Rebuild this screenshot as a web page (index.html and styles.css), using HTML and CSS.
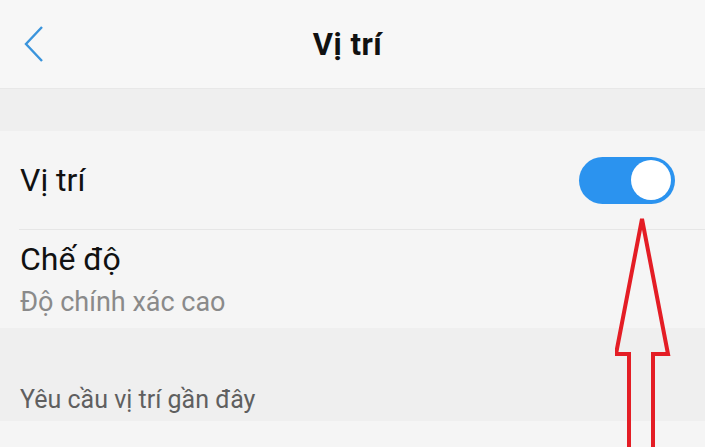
FILE: index.html
```html
<!DOCTYPE html>
<html lang="vi">
<head>
    <meta charset="UTF-8">
    <meta name="viewport" content="width=device-width, initial-scale=1.0">
    <title>Vị trí</title>
    <link rel="stylesheet" href="styles.css">
</head>
<body>
    <div class="screen">
        <header class="topbar">
            <button class="back">
                <svg width="20" height="38" viewBox="0 0 20 38">
                    <polyline points="18,1 2,18 18,35" fill="none" stroke="#3a94dc" stroke-width="2.4"/>
                </svg>
            </button>
            <h1>Vị trí</h1>
        </header>

        <div class="gap"></div>

        <section class="list">
            <div class="row">
                <span class="label">Vị trí</span>
                <div class="toggle on"><span class="knob"></span></div>
            </div>
            <div class="row mode">
                <span class="label">Chế độ</span>
                <span class="sub">Độ chính xác cao</span>
            </div>
        </section>

        <div class="section-title">Yêu cầu vị trí gần đây</div>
        <div class="rest"></div>

        <!-- red marker pointing at the switch -->
        <svg class="arrow" width="70" height="240" viewBox="0 0 70 240">
            <polyline points="14,240 14,139 1,139 27,4 53,139 38,139 38,240"
                      fill="none" stroke="#e41d25" stroke-width="4" stroke-linejoin="miter"/>
        </svg>
    </div>
</body>
</html>
```

FILE: styles.css
```css
body {
    margin: 0;
    font-family: Roboto, "Noto Sans", sans-serif;
    background: #f5f5f5;
}
.screen {
    position: relative;
    width: 705px;
    height: 447px;
    overflow: hidden;
}
.topbar {
    height: 88px;
    background: #f7f7f7;
    display: flex;
    align-items: center;
    justify-content: center;
    position: relative;
}
.topbar h1 {
    margin: 0 10px 0 0;
    font-size: 31px;
    font-weight: 700;
    color: #111;
    letter-spacing: 0.5px;
}
.back {
    position: absolute;
    left: 24px;
    top: 26px;
    border: none;
    background: none;
    padding: 0;
    display: flex;
}
.gap {
    height: 42px;
    background: #efefef;
    border-top: 1px solid #e8e8e8;
}
.list {
    background: #f5f5f5;
}
.row {
    height: 98px;
    padding: 0 30px 0 20px;
    display: flex;
    align-items: center;
    justify-content: space-between;
}
.row + .row {
    margin-left: 19px;
    padding-left: 1px;
    border-top: 1px solid #e6e6e6;
}
.label {
    font-size: 32px;
    line-height: 36px;
    color: #111;
}
.mode {
    flex-direction: column;
    align-items: flex-start;
    justify-content: center;
    gap: 9px;
}
.sub {
    font-size: 27px;
    line-height: 32px;
    color: #8a8a8a;
}
.toggle {
    width: 96px;
    height: 47px;
    border-radius: 24px;
    background: #2b93ef;
    display: flex;
    align-items: center;
    justify-content: flex-end;
    padding: 0 4px;
    box-sizing: border-box;
}
.knob {
    width: 40px;
    height: 40px;
    border-radius: 50%;
    background: #fff;
}
.section-title {
    height: 93px;
    background: #efefef;
    padding: 0 20px 7px;
    display: flex;
    align-items: flex-end;
    box-sizing: border-box;
    font-size: 25px;
    color: #5f5f5f;
}
.rest {
    height: 40px;
    background: #f5f5f5;
}
.arrow {
    position: absolute;
    left: 615px;
    top: 215px;
}
```
